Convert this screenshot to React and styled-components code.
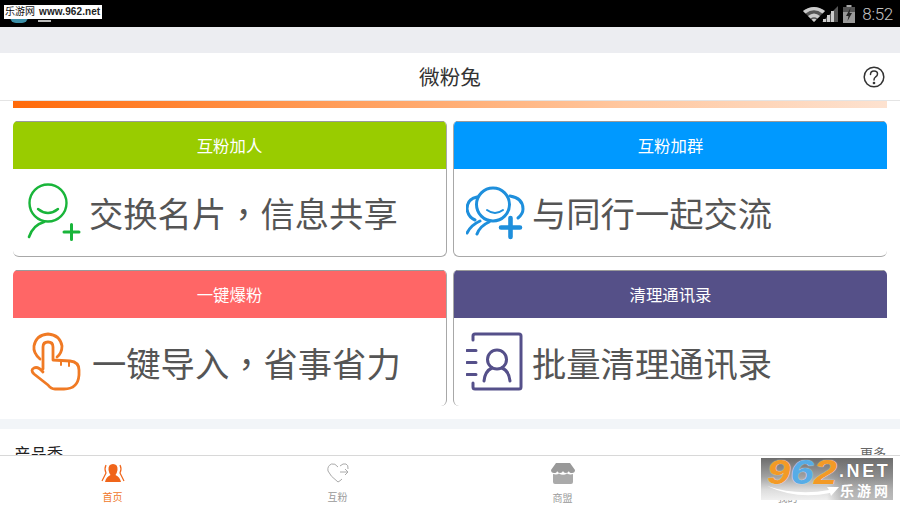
import React from "react";
import styled, { createGlobalStyle } from "styled-components";

const CJK = `"Noto Sans CJK SC", "Liberation Sans", sans-serif`;

const Global = createGlobalStyle`
  html, body { margin: 0; padding: 0; background: #fff; }
  body { font-family: ${CJK}; }
  * { box-sizing: border-box; }
`;

const Page = styled.div`
  position: relative;
  width: 900px;
  height: 506px;
  overflow: hidden;
  display: flex;
  flex-direction: column;
  background: #fff;
`;

const StatusBar = styled.div`
  position: relative;
  height: 27px;
  flex: none;
  background: #000;
  display: flex;
  align-items: center;
  justify-content: flex-end;
  padding: 0 7px 0 0;
`;

const AppBlob = styled.div`
  position: absolute;
  left: 10px;
  top: 10px;
  width: 18px;
  height: 13px;
  border-radius: 0 0 6px 6px;
  background: #3b8fa8;
`;

const NoticeDash = styled.div`
  position: absolute;
  left: 38px;
  top: 20px;
  width: 13px;
  height: 2px;
  background: #bbb;
`;

const Clock = styled.span`
  font-family: Roboto, "Liberation Sans", sans-serif;
  font-weight: 300;
  font-size: 17px;
  color: #c4c4c4;
  margin-left: 7px;
  letter-spacing: -0.3px;
`;

const Band = styled.div`
  height: ${(p) => p.$h}px;
  flex: none;
  background: ${(p) => p.$bg};
`;

const Header = styled.header`
  position: relative;
  height: 48px;
  flex: none;
  display: flex;
  align-items: center;
  justify-content: center;
  padding-bottom: 2px;
  background: #fff;
  border-bottom: 1px solid #e4e4e4;
  font-size: 20.6px;
  color: #333;
`;

const HelpIcon = styled.svg`
  position: absolute;
  right: 15px;
  top: 13px;
`;

const Scroll = styled.main`
  flex: 1;
  min-height: 0;
  overflow: hidden;
  display: flex;
  flex-direction: column;
`;

const Progress = styled.div`
  height: 7px;
  flex: none;
  margin: 0 13px;
  background: linear-gradient(90deg, #ff6a0a 0%, #ff9a55 35%, #ffc79f 70%, #fde2d0 100%);
`;

const Grid = styled.div`
  display: grid;
  grid-template-columns: 434px 434px;
  grid-auto-rows: 136px;
  column-gap: 6px;
  row-gap: 13px;
  padding: 13px 13px 13px;
`;

const Card = styled.section`
  display: flex;
  flex-direction: column;
  background: #fff;
  border-radius: 5px 5px 6px 6px;
  border-bottom: ${(p) => (p.$open ? "none" : "1px solid #a8a8a8")};
  border-left: ${(p) => (p.$side === "right" ? "1px solid #a8a8a8" : "none")};
  border-right: ${(p) => (p.$side === "left" ? "1px solid #a8a8a8" : "none")};
  overflow: hidden;
`;

const CardHead = styled.div`
  height: 48px;
  flex: none;
  display: flex;
  align-items: center;
  justify-content: center;
  padding-bottom: 2px;
  color: #fff;
  font-size: 16.4px;
  background: ${(p) => p.$color};
  border-top: 1px solid #9a9a9a;
`;

const CardBody = styled.div`
  flex: 1;
  display: flex;
  align-items: center;
  padding-left: ${(p) => p.$pad}px;
`;

const IconBox = styled.div`
  width: ${(p) => p.$w}px;
  height: 66px;
  flex: none;
  display: flex;
  align-items: center;
`;

const Slogan = styled.span`
  font-size: 34.3px;
  line-height: 1;
  color: #555;
  white-space: nowrap;
`;

const Comma = styled.span`
  font-family: "Noto Sans CJK TC", sans-serif;
`;

const SectionRow = styled.div`
  display: flex;
  justify-content: space-between;
  align-items: flex-start;
  padding: 14px 14px 0;
`;

const SectionTitle = styled.span`
  font-size: 16.4px;
  line-height: 20px;
  color: #222;
`;

const More = styled.span`
  font-size: 13px;
  line-height: 20px;
  color: #666;
`;

const TabBar = styled.nav`
  height: 51px;
  flex: none;
  display: grid;
  grid-template-columns: repeat(4, 225px);
  background: #fff;
  border-top: 1px solid #d8d8d8;
`;

const Tab = styled.div`
  display: flex;
  flex-direction: column;
  align-items: center;
  padding-top: 7px;
  font-size: 10px;
  line-height: 14px;
  color: ${(p) => (p.$active ? "#f0782a" : "#999")};
  gap: 7px;
`;

const TabIcon = styled.svg`
  display: block;
`;

const TopMark = styled.div`
  position: absolute;
  left: 4px;
  top: 5px;
  width: 98px;
  height: 14px;
  background: #fff;
  display: flex;
  align-items: center;
  padding-left: 1px;
  color: #111;
  font-size: 10px;
  line-height: 14px;
  white-space: nowrap;
  font-family: "Liberation Sans", "Noto Sans CJK SC", sans-serif;
`;

const MarkUrl = styled.span`
  margin-left: 4px;
  font-weight: 700;
  letter-spacing: 0.1px;
  color: #222;
`;

const BottomMark = styled.div`
  position: absolute;
  left: 761px;
  top: 458px;
  width: 132px;
  height: 42px;
  background:
    linear-gradient(90deg, rgba(110, 110, 110, 0) 50%, rgba(110, 110, 110, 0.4) 62%),
    linear-gradient(180deg, #6c6c6c 0%, #a2a2a2 45%, #dcdcdc 75%, #f0f0f0 100%);
  overflow: hidden;
`;

const MarkDigits = styled.div`
  position: absolute;
  left: 6px;
  top: -4px;
  font-family: "Liberation Sans", sans-serif;
  font-weight: 700;
  font-style: italic;
  font-size: 35px;
  line-height: 36px;
  color: #f39a26;
  transform: scaleX(1.2);
  transform-origin: left center;
  text-shadow: 0 0 1px #fff;
`;

const BlueDigit = styled.span`
  color: #57ace6;
`;

const MarkNet = styled.div`
  position: absolute;
  left: 78px;
  top: 3px;
  font-family: "Liberation Sans", sans-serif;
  font-weight: 700;
  font-size: 18px;
  line-height: 20px;
  letter-spacing: 2.6px;
  white-space: nowrap;
  color: #fff;
  text-shadow: 0 0 1px #555;
`;

const MarkName = styled.div`
  position: absolute;
  left: 79px;
  top: 23px;
  font-size: 14px;
  line-height: 18px;
  font-weight: 700;
  letter-spacing: 3px;
  white-space: nowrap;
  color: #fff;
`;

const Swoosh = styled.svg`
  position: absolute;
  left: 6px;
  top: 27px;
`;

const Wifi = () => (
  <svg width="22" height="16" viewBox="0 0 22 16">
    <path d="M0 5 Q11 -3 22 5 L11 16 Z" fill="#555" />
    <path d="M0 5 Q11 -3 22 5 L19.5 7.5 Q11 1 2.5 7.5 Z" fill="#ccc" />
    <path d="M5 10 Q11 5 17 10 L14.5 12.5 Q11 10 7.5 12.5 Z" fill="#ccc" />
    <path d="M8.5 13.5 Q11 12 13.5 13.5 L11 16 Z" fill="#ccc" />
  </svg>
);

const Signal = () => (
  <svg width="16" height="16" viewBox="0 0 16 16" style={{ marginLeft: -3 }}>
    <path d="M16 0 V16 H0 Z" fill="#555" />
    <rect x="1" y="13" width="3" height="3" fill="#ccc" />
    <rect x="5" y="9" width="3" height="7" fill="#ccc" />
    <rect x="9" y="5" width="3" height="11" fill="#ccc" />
  </svg>
);

const Battery = () => (
  <svg width="12" height="18" viewBox="0 0 12 18" style={{ marginLeft: 5 }}>
    <rect x="3.5" y="0" width="5" height="2" fill="#aaa" />
    <rect x="0" y="2" width="12" height="16" fill="#999" />
    <rect x="0" y="2" width="12" height="5" fill="#555" />
    <path d="M7.5 3 L3 11 H5.5 L4.5 16 L9 8 H6.5 Z" fill="#222" />
  </svg>
);

const GreenIcon = () => (
  <svg width="58" height="66" viewBox="0 0 58 66" fill="none" stroke="#19b53a" strokeLinecap="round">
    <circle cx="22" cy="23" r="18.5" strokeWidth="2.4" />
    <path d="M12 29 Q22 37 32 29" strokeWidth="2.4" />
    <path d="M18 42 Q7 45 3 57" strokeWidth="2.6" />
    <path d="M45.500 44.500 V59.500 M38 52 H53" strokeWidth="3" />
  </svg>
);

const BlueIcon = () => (
  <svg width="60" height="66" viewBox="0 0 60 66" fill="none" stroke="#1e8fdc" strokeLinecap="round">
    <circle cx="27" cy="24.500" r="16.500" strokeWidth="3" />
    <path d="M21 30 Q29 36 37 30" strokeWidth="2" />
    <path d="M11 17 Q1 19 1 29 Q2 37 9 40" strokeWidth="3" />
    <path d="M44 16 Q57 18 57 29 Q57 34 52 38" strokeWidth="3" />
    <path d="M14 41 Q5 45 1 53 M23 42 Q14 46 11 54" strokeWidth="3" />
    <path d="M44.500 38 V57 M35 47.500 H54" strokeWidth="4.600" />
  </svg>
);

const HandIcon = () => (
  <svg width="60" height="66" viewBox="0 0 60 66" fill="none" stroke="#f07a24" strokeWidth="2.8" strokeLinecap="round" strokeLinejoin="round">
    <path d="M10 30 Q3 24 4 17 Q6 6 18 5 Q30 6 32 17 Q32 24 27 28" />
    <path d="M13 40 V18 Q13 13 18 13 Q23 13 23 18 V31 L40 32 Q49 33 49 41 V46 Q48 60 34 60 H25 Q21 60 18 56 L4 45 Q0 41 4 39 Q8 37 13 43" />
    <path d="M31 32 V36 M39 33 V37" strokeWidth="2" />
  </svg>
);

const BookIcon = () => (
  <svg width="62" height="66" viewBox="0 0 62 66" fill="none" stroke="#55508a" strokeWidth="3" strokeLinecap="round" strokeLinejoin="round">
    <path d="M7 11 V7 Q7 5 9 5 H53 Q55 5 55 7 V58 Q55 60 53 60 H9 Q7 60 7 58 V54" />
    <path d="M1 21.500 H10 M1 33.500 H10 M1 45.500 H10" />
    <circle cx="31" cy="30.500" r="9.500" />
    <path d="M18 52 Q19 42 26 39 M44 52 Q43 42 36 39" />
  </svg>
);

const HomeTab = () => (
  <TabIcon width="24" height="20" viewBox="0 0 24 20" fill="none">
    <path d="M12 1 Q17 1 16.5 7 Q16 10 14.5 12 Q19 14 20 19 H4 Q5 14 9.5 12 Q8 10 7.5 7 Q7 1 12 1 Z" fill="#f0651a" />
    <path d="M5 2 Q3 6 5 10 L1 18 M19 2 Q21 6 19 10 L23 18" stroke="#f0651a" strokeWidth="1.2" />
  </TabIcon>
);

const HeartTab = () => (
  <TabIcon width="22" height="20" viewBox="0 0 22 20" fill="none" stroke="#aaa" strokeWidth="1">
    <path d="M11 4 Q8 0 4.500 1 Q0 3 1 8 Q3 13 11 19 Q13 18 15 16 M13 3 Q16 0 19 1 Q21.500 2 21 6" />
    <path d="M13 9 H21 M18 6 L21 9 L18 12" />
  </TabIcon>
);

const ShopTab = () => (
  <TabIcon width="24" height="21" viewBox="0 0 24 21">
    <path d="M5 0 H19 L24 7 Q24 10 21 10 Q18 10 18 8 Q17 10 15 10 Q12.500 10 12 8 Q11.500 10 9 10 Q7 10 6 8 Q6 10 3 10 Q0 10 0 7 Z" fill="#999" />
    <path d="M2 11 Q6 12 8 10.500 Q12 13 16 10.500 Q19 12 22 11 V19 Q22 21 20 21 H4 Q2 21 2 19 Z" fill="#aaa" />
  </TabIcon>
);

const cards = [
  { side: "left", title: "互粉加人", color: "#99cc00", before: "交换名片", after: "信息共享", icon: <GreenIcon />, pad: 13, w: 63 },
  { side: "right", title: "互粉加群", color: "#0099ff", before: "与同行一起交流", icon: <BlueIcon />, pad: 12, w: 66 },
  { side: "left", title: "一键爆粉", color: "#ff6666", before: "一键导入", after: "省事省力", icon: <HandIcon />, pad: 17, w: 62, open: true },
  { side: "right", title: "清理通讯录", color: "#555088", before: "批量清理通讯录", icon: <BookIcon />, pad: 12, w: 66, open: true },
];

const tabs = [
  { label: "首页", icon: <HomeTab />, active: true },
  { label: "互粉", icon: <HeartTab /> },
  { label: "商盟", icon: <ShopTab /> },
  { label: "我的", icon: <ShopTab /> },
];

export default function App() {
  return (
    <Page>
      <Global />
      <StatusBar>
        <AppBlob />
        <NoticeDash />
        <Wifi />
        <Signal />
        <Battery />
        <Clock>8:52</Clock>
      </StatusBar>
      <Band $h={26} $bg="#ecedf1" />
      <Header>
        微粉兔
        <HelpIcon width="22" height="22" viewBox="0 0 22 22" fill="none" stroke="#333" strokeWidth="1.5">
          <circle cx="11" cy="11" r="9.800" />
          <path d="M7.500 8.500 Q7.500 5 11 5 Q14.500 5 14.500 8 Q14.500 10 12.500 11 Q11 12 11 14" strokeLinecap="round" />
          <circle cx="11" cy="17" r="0.600" fill="#333" />
        </HelpIcon>
      </Header>
      <Scroll>
        <Progress />
        <Grid>
          {cards.map((c) => (
            <Card key={c.title} $side={c.side} $open={c.open}>
              <CardHead $color={c.color}>{c.title}</CardHead>
              <CardBody $pad={c.pad}>
                <IconBox $w={c.w}>{c.icon}</IconBox>
                <Slogan>
                  {c.before}
                  {c.after && <Comma>，</Comma>}
                  {c.after}
                </Slogan>
              </CardBody>
            </Card>
          ))}
        </Grid>
        <Band $h={10} $bg="#f2f5f8" />
        <SectionRow>
          <SectionTitle>产品秀</SectionTitle>
          <More>更多</More>
        </SectionRow>
      </Scroll>
      <TabBar>
        {tabs.map((t) => (
          <Tab key={t.label} $active={t.active}>
            {t.icon}
            {t.label}
          </Tab>
        ))}
      </TabBar>
      <TopMark>
        乐游网<MarkUrl>www.962.net</MarkUrl>
      </TopMark>
      <BottomMark>
        <Swoosh width="72" height="14" viewBox="0 0 72 14">
          <path d="M0 1 Q30 11 62 5 L60 2 L72 2 L64 11 L63 8 Q30 15 0 1 Z" fill="#fff" />
        </Swoosh>
        <MarkDigits>
          9<BlueDigit>6</BlueDigit>2
        </MarkDigits>
        <MarkNet>.NET</MarkNet>
        <MarkName>乐游网</MarkName>
      </BottomMark>
    </Page>
  );
}
